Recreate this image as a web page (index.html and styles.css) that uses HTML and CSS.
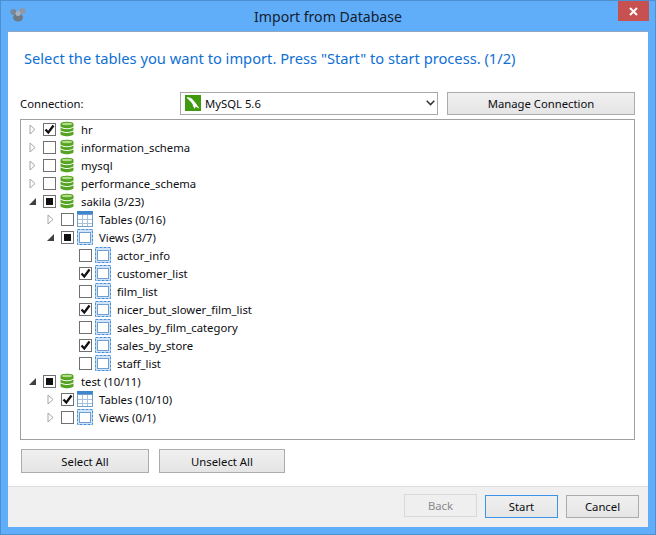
FILE: index.html
```html
<!DOCTYPE html>
<html lang="en">
<head>
<meta charset="utf-8">
<title>Import from Database</title>
<link rel="stylesheet" href="styles.css">
</head>
<body>
<svg class="defs" width="0" height="0" aria-hidden="true">
  <symbol id="db" viewBox="0 0 16 16">
    <path d="M1.500 3C1.500 1.500 4.500.8 8 .8s6.500.7 6.500 2.200v2c0 1.300-3 2.200-6.500 2.200S1.500 6.300 1.500 5z" fill="#54a322"/>
    <path d="M1.500 6.500C3 7.600 5.200 8.200 8 8.200s5-.6 6.500-1.700v2.300C14.500 10 11.500 11 8 11S1.500 10 1.500 8.800z" fill="#54a322"/>
    <path d="M1.500 10.300C3 11.500 5.200 12 8 12s5-.5 6.500-1.700V13c0 1.300-3 2.200-6.500 2.200S1.500 14.300 1.500 13z" fill="#54a322"/>
    <ellipse cx="8" cy="3" rx="5.200" ry="1.200" fill="#b3dc8a"/>
  </symbol>
  <symbol id="table" viewBox="0 0 16 16">
    <rect x=".5" y=".5" width="15" height="15" fill="#fff" stroke="#6f9fd0"/>
    <rect x="0" y="0" width="16" height="4" fill="#3f86cc"/>
    <path d="M5.500 4v12M10.500 4v12M0 8.500h16M0 12.500h16" stroke="#a8c0da" fill="none"/>
    <rect x=".5" y="3.500" width="15" height="12" fill="none" stroke="#6f9fd0"/>
  </symbol>
  <symbol id="view" viewBox="0 0 16 16">
    <rect x=".5" y=".5" width="15" height="15" fill="#d3e6f9" stroke="#4a90d9" stroke-dasharray="3 1"/>
    <rect x="2.500" y="3.500" width="11" height="10" fill="#fff" stroke="#6f9fd0"/>
  </symbol>
  <symbol id="closed" viewBox="0 0 7 11">
    <path d="M1 1l5 4.500L1 10z" fill="#fff" stroke="#a6a6a6"/>
  </symbol>
  <symbol id="open" viewBox="0 0 7 7">
    <path d="M7 0v7H0z" fill="#404040"/>
  </symbol>
  <symbol id="tick" viewBox="0 0 11 11">
    <path d="M1.500 5.500l2.800 3L9.500 1.500" fill="none" stroke="#111" stroke-width="2.300"/>
  </symbol>
</svg>

<div class="window">
  <header class="titlebar">
    <svg class="app-icon" viewBox="0 0 16 14" aria-hidden="true">
      <circle cx="3.500" cy="4" r="3" fill="#7c8794"/>
      <circle cx="12.500" cy="3" r="3" fill="#8e99a5"/>
      <ellipse cx="8" cy="9.500" rx="5" ry="4" fill="#6f7a87"/>
      <circle cx="8" cy="5.500" r="2.500" fill="#a9b2bc"/>
    </svg>
    <span class="title">Import from Database</span>
    <button class="close" aria-label="Close">
      <svg viewBox="0 0 9 9" width="9" height="9" aria-hidden="true"><path d="M1 1l7 7M8 1L1 8" stroke="#fff" stroke-width="2"/></svg>
    </button>
  </header>

  <main class="panel">
    <div class="content">
      <h1 class="heading">Select the tables you want to import. Press "Start" to start process. (1/2)</h1>
      <div class="connection">
        <label class="conn-label">Connection:</label>
        <div class="combo">
          <svg class="mysql" viewBox="0 0 16 16" aria-hidden="true">
            <rect width="16" height="16" fill="#3f9a0e"/>
            <path d="M1.500 2.500C4 1.800 6.500 3 8 5c1.500 2 3 3 4 5 .5 1 1.500 2 2.500 3.500C12.500 13 11.500 12 10.500 11.500L10 14C8.500 12.500 8 11 7.500 9 6.500 7 4.500 6 3.500 4.500 2.800 3.800 2 3.200 1.500 2.500z" fill="#fff"/>
          </svg>
          <span class="combo-text">MySQL 5.6</span>
          <svg class="chevron" viewBox="0 0 9 6" aria-hidden="true"><path d="M.7.8l3.800 3.800L8.300.8" fill="none" stroke="#333" stroke-width="1.500"/></svg>
        </div>
        <button class="btn manage">Manage Connection</button>
      </div>

      <div class="tree">
        <div class="row"><svg class="exp exp-closed"><use href="#closed"/></svg><span class="cb"><svg class="tick"><use href="#tick"/></svg></span><svg class="ico"><use href="#db"/></svg><span class="lbl">hr</span></div>
        <div class="row"><svg class="exp exp-closed"><use href="#closed"/></svg><span class="cb"></span><svg class="ico"><use href="#db"/></svg><span class="lbl">information_schema</span></div>
        <div class="row"><svg class="exp exp-closed"><use href="#closed"/></svg><span class="cb"></span><svg class="ico"><use href="#db"/></svg><span class="lbl">mysql</span></div>
        <div class="row"><svg class="exp exp-closed"><use href="#closed"/></svg><span class="cb"></span><svg class="ico"><use href="#db"/></svg><span class="lbl">performance_schema</span></div>
        <div class="row"><svg class="exp exp-open"><use href="#open"/></svg><span class="cb"><i class="part"></i></span><svg class="ico"><use href="#db"/></svg><span class="lbl">sakila (3/23)</span></div>
        <div class="row l1"><svg class="exp exp-closed"><use href="#closed"/></svg><span class="cb"></span><svg class="ico"><use href="#table"/></svg><span class="lbl">Tables (0/16)</span></div>
        <div class="row l1"><svg class="exp exp-open"><use href="#open"/></svg><span class="cb"><i class="part"></i></span><svg class="ico"><use href="#view"/></svg><span class="lbl">Views (3/7)</span></div>
        <div class="row l2"><span class="exp"></span><span class="cb"></span><svg class="ico"><use href="#view"/></svg><span class="lbl">actor_info</span></div>
        <div class="row l2"><span class="exp"></span><span class="cb"><svg class="tick"><use href="#tick"/></svg></span><svg class="ico"><use href="#view"/></svg><span class="lbl">customer_list</span></div>
        <div class="row l2"><span class="exp"></span><span class="cb"></span><svg class="ico"><use href="#view"/></svg><span class="lbl">film_list</span></div>
        <div class="row l2"><span class="exp"></span><span class="cb"><svg class="tick"><use href="#tick"/></svg></span><svg class="ico"><use href="#view"/></svg><span class="lbl">nicer_but_slower_film_list</span></div>
        <div class="row l2"><span class="exp"></span><span class="cb"></span><svg class="ico"><use href="#view"/></svg><span class="lbl">sales_by_film_category</span></div>
        <div class="row l2"><span class="exp"></span><span class="cb"><svg class="tick"><use href="#tick"/></svg></span><svg class="ico"><use href="#view"/></svg><span class="lbl">sales_by_store</span></div>
        <div class="row l2"><span class="exp"></span><span class="cb"></span><svg class="ico"><use href="#view"/></svg><span class="lbl">staff_list</span></div>
        <div class="row"><svg class="exp exp-open"><use href="#open"/></svg><span class="cb"><i class="part"></i></span><svg class="ico"><use href="#db"/></svg><span class="lbl">test (10/11)</span></div>
        <div class="row l1"><svg class="exp exp-closed"><use href="#closed"/></svg><span class="cb"><svg class="tick"><use href="#tick"/></svg></span><svg class="ico"><use href="#table"/></svg><span class="lbl">Tables (10/10)</span></div>
        <div class="row l1"><svg class="exp exp-closed"><use href="#closed"/></svg><span class="cb"></span><svg class="ico"><use href="#view"/></svg><span class="lbl">Views (0/1)</span></div>
      </div>

      <div class="select-actions">
        <button class="btn select-btn">Select All</button>
        <button class="btn select-btn">Unselect All</button>
      </div>
    </div>

    <footer class="footer">
      <button class="btn nav disabled">Back</button>
      <button class="btn nav primary">Start</button>
      <button class="btn nav">Cancel</button>
    </footer>
  </main>
</div>
</body>
</html>
```

FILE: styles.css
```css
* {
  box-sizing: border-box;
}

html,
body {
  margin: 0;
  padding: 0;
}

body {
  width: 656px;
  height: 535px;
  overflow: hidden;
  font-family: "Noto Sans", "Open Sans", sans-serif;
  font-size: 11.3px;
  color: #0d0d12;
}

.defs {
  display: block;
  height: 0;
}

.window {
  width: 656px;
  height: 535px;
  display: flex;
  flex-direction: column;
  background: #60aefa;
  border: 1px solid #4d8fd0;
  padding: 0 7px 7px;
}

.titlebar {
  height: 30px;
  flex: none;
  display: flex;
  align-items: center;
  justify-content: center;
  position: relative;
}

.app-icon {
  position: absolute;
  left: 2px;
  top: 7px;
  width: 16px;
  height: 14px;
}

.title {
  font-size: 14.1px;
  color: #14202e;
}

.close {
  position: absolute;
  right: -1px;
  top: 0;
  width: 31px;
  height: 20px;
  padding: 0;
  border: 0;
  background: #c75050;
  display: flex;
  align-items: center;
  justify-content: center;
}

.panel {
  flex: 1;
  min-height: 0;
  display: flex;
  flex-direction: column;
  background: #fff;
  border-top: 1px solid #8fa9c4;
}

.content {
  flex: 1;
  min-height: 0;
  padding: 0 13px 0 12px;
}

.heading {
  margin: 14px 0 0 4px;
  font-size: 14.68px;
  line-height: 24px;
  font-weight: 400;
  color: #0f70d4;
  white-space: nowrap;
}

.connection {
  display: flex;
  align-items: center;
  height: 24px;
  margin-top: 21px;
}

.conn-label {
  width: 160px;
  flex: none;
}

.combo {
  width: 258px;
  height: 23px;
  flex: none;
  display: flex;
  align-items: center;
  padding-left: 4px;
  border: 1px solid #a9a9a9;
  background: #fff;
}

.mysql {
  width: 16px;
  height: 16px;
  flex: none;
}

.combo-text {
  margin-left: 4px;
  flex: 1;
}

.chevron {
  width: 9px;
  height: 6px;
  margin-right: 2px;
}

.btn {
  font: inherit;
  color: #0d0d12;
  height: 23px;
  padding: 0;
  border: 1px solid #acacac;
  background: linear-gradient(#f0f0f0, #e5e5e5);
}

.manage {
  width: 188px;
  margin-left: 9px;
}

.tree {
  height: 321px;
  margin-top: 4px;
  border: 1px solid #a0a0a0;
  background: #fff;
}

.row {
  height: 18px;
  display: flex;
  align-items: center;
  padding-left: 8px;
  white-space: nowrap;
}

.row.l1 {
  padding-left: 26px;
}

.row.l2 {
  padding-left: 44px;
}

.exp {
  width: 7px;
  height: 11px;
  flex: none;
  margin-right: 7px;
}

.exp-open {
  height: 7px;
}

.cb {
  width: 13px;
  height: 13px;
  flex: none;
  border: 1px solid #707070;
  background: #fff;
  display: flex;
  align-items: center;
  justify-content: center;
}

.tick {
  width: 11px;
  height: 11px;
}

.part {
  display: block;
  width: 7px;
  height: 7px;
  background: #111;
}

.ico {
  width: 16px;
  height: 16px;
  flex: none;
  margin-left: 3px;
}

.lbl {
  margin-left: 6px;
}

.select-actions {
  display: flex;
  gap: 10px;
  margin: 9px 0 0 1px;
}

.select-btn {
  width: 128px;
  height: 24px;
}

.select-btn + .select-btn {
  width: 126px;
}

.footer {
  height: 41px;
  flex: none;
  display: flex;
  justify-content: flex-end;
  gap: 8px;
  padding: 8px 9px 0 0;
  background: #f0f0f0;
  border-top: 1px solid #dfdfdf;
}

.nav {
  width: 73px;
  height: 23px;
}

.nav.primary {
  border-color: #3c94e8;
}

.nav.disabled {
  color: #8a8a8a;
  background: #efefef;
  border-color: #d9d9d9;
  margin-top: -1px;
}
```
